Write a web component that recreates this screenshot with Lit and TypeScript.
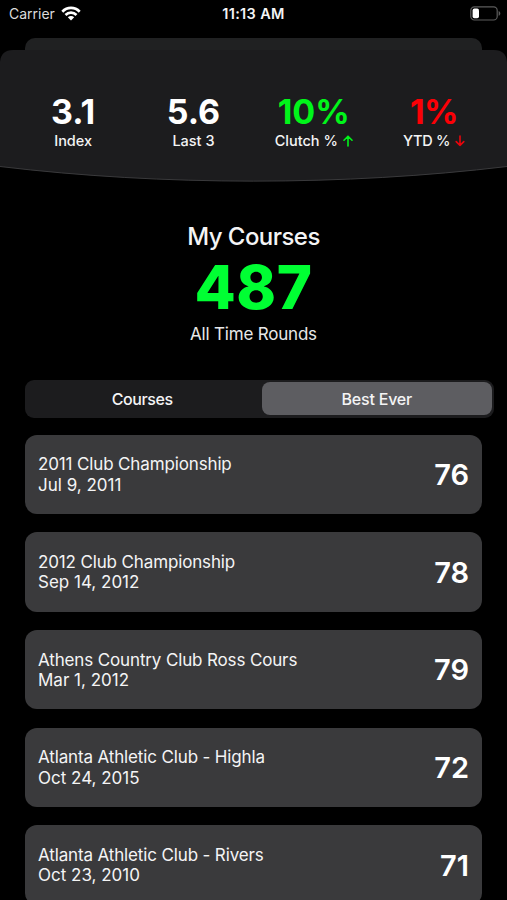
import { LitElement, html, css, svg } from "lit";
import { customElement } from "lit/decorators.js";
import { classMap } from "lit/directives/class-map.js";

type Trend = "up" | "down" | "";

const stats: { value: string; label: string; trend: Trend }[] = [
  { value: "3.1", label: "Index", trend: "" },
  { value: "5.6", label: "Last 3", trend: "" },
  { value: "10%", label: "Clutch %", trend: "up" },
  { value: "1%", label: "YTD %", trend: "down" },
];

const rounds = [
  { course: "2011 Club Championship", date: "Jul 9, 2011", score: 76 },
  { course: "2012 Club Championship", date: "Sep 14, 2012", score: 78 },
  { course: "Athens Country Club Ross Cours", date: "Mar 1, 2012", score: 79 },
  { course: "Atlanta Athletic Club - Highla", date: "Oct 24, 2015", score: 72 },
  { course: "Atlanta Athletic Club - Rivers", date: "Oct 23, 2010", score: 71 },
];

@customElement("app-root")
export class AppRoot extends LitElement {
  static styles = css`
    :host {
      display: block;
      position: relative;
      width: 507px;
      height: 900px;
      overflow: hidden;
      background: #000;
      color: #f4f4f5;
      font-family: Inter, "Liberation Sans", sans-serif;
    }
    .status {
      display: grid;
      grid-template-columns: 1fr auto 1fr;
      align-items: center;
      height: 28px;
      padding: 0 6px 0 9px;
      font-size: 14px;
      box-sizing: border-box;
      line-height: 28px;
    }
    .carrier { display: flex; align-items: center; gap: 6px; color: #dcdcdc; }
    .wifi { display: block; margin-top: -2px; }
    .time { font-weight: 600; font-size: 14.5px; letter-spacing: 0.35px; margin-right: 3px; }
    .power { display: flex; justify-content: flex-end; margin-top: -1px; }
    .back-sheet {
      height: 12px;
      margin: 10px 25px 0;
      border-radius: 10px 10px 0 0;
      background: #202122;
    }
    .header { position: relative; height: 132px; }
    .curve { position: absolute; inset: 0; display: block; }
    .stats {
      position: relative;
      display: grid;
      grid-template-columns: repeat(4, 120.3px);
      padding: 44px 0 0 13px;
    }
    .stat { text-align: center; }
    .value { font-size: 34px; line-height: 36px; font-weight: 650; color: #fff; }
    .value.up { color: #00f51a; }
    .value.down { color: #fc0006; letter-spacing: -0.5px; }
    .label {
      display: flex;
      justify-content: center;
      align-items: center;
      gap: 5px;
      margin-top: 1px;
      font-size: 14.5px;
      line-height: 20px;
      font-weight: 500;
    }
    .label.down { letter-spacing: -0.3px; }
    .summary { text-align: center; margin-top: 41px; }
    .title { font-size: 24px; line-height: 28px; font-weight: 550; letter-spacing: -0.55px; }
    .total { font-size: 60px; line-height: 60px; font-weight: 800; color: #00ff33; margin-top: 6px; letter-spacing: 0.6px; }
    .caption { font-size: 17px; line-height: 22px; margin-top: 6px; color: #e8e8e8; letter-spacing: -0.2px; }
    .tabs {
      display: grid;
      grid-template-columns: 1fr 1fr;
      width: 469px;
      height: 38px;
      box-sizing: border-box;
      margin: 34.5px 0 0 25px;
      padding: 2.5px 2px;
      border-radius: 9px;
      background: #1c1c1e;
    }
    .tab {
      display: flex;
      align-items: center;
      justify-content: center;
      border-radius: 8px;
      font-size: 16px;
      font-weight: 500;
      letter-spacing: -0.4px;
      padding-right: 2px;
    }
    .tab.active { background: #5d5d61; margin-left: 2px; padding: 0; letter-spacing: -0.2px; }
    .list { display: flex; flex-direction: column; gap: 18.2px; margin: 17px 25px 0; }
    .card {
      display: flex;
      justify-content: space-between;
      align-items: center;
      height: 79.5px;
      box-sizing: border-box;
      padding: 0.6px 13px 0;
      border-radius: 12px;
      background: #3a3a3c;
      flex: none;
    }
    .info { font-size: 17px; line-height: 20.3px; white-space: nowrap; }
    .course { letter-spacing: -0.14px; }
    .score { font-size: 29px; font-weight: 600; color: #fff; }
  `;

  private arrow(trend: Trend) {
    if (!trend) return "";
    const up = trend === "up";
    return html`<svg width="10" height="12" viewBox="0 0 10 12" fill="none"
      stroke=${up ? "#00f51a" : "#e8050c"} stroke-width="1.6" stroke-linecap="round" stroke-linejoin="round">
      ${up ? svg`<path d="M5 11V1.2M1 5.2L5 1.2L9 5.2"/>` : svg`<path d="M5 1V10.4M1.2 6.6L5 10.4L8.8 6.6"/>`}
    </svg>`;
  }

  render() {
    return html`
      <div class="status">
        <div class="carrier">
          <span>Carrier</span>
          <svg class="wifi" width="20" height="15" viewBox="0 0 20 15" fill="none" stroke="#fff" stroke-width="2.7">
            <path d="M1.3 5.7C6.2 .7 13.8 .7 18.7 5.7"/>
            <path d="M4.5 9C7.6 5.9 12.4 5.9 15.5 9"/>
            <path d="M10 14.4L6.8 11.3C8.6 9.6 11.4 9.6 13.2 11.3Z" fill="#fff" stroke="none"/>
          </svg>
        </div>
        <div class="time">11:13 AM</div>
        <div class="power">
          <svg width="31" height="15" viewBox="0 0 31 15">
            <rect x=".8" y=".8" width="26.4" height="13.2" rx="3.6" fill="none" stroke="#5c5c5c" stroke-width="1.2"/>
            <rect x="2.6" y="2.6" width="6.4" height="9.6" rx="1.8" fill="#fff"/>
            <path d="M28.6 5C30.9 5.8 30.9 9 28.6 9.8Z" fill="#5c5c5c"/>
          </svg>
        </div>
      </div>
      <div class="back-sheet"></div>
      <div class="header">
        <svg class="curve" width="507" height="132" viewBox="0 0 507 132">
          <path d="M0 12Q1 0 13 0H494Q506 0 507 12V116.5C345 136 162 136 0 116.5Z" fill="#1c1c1e"/>
          <path d="M0 116.5C162 136 345 136 507 116.5" fill="none" stroke="#3a3a3c" stroke-width="1"/>
        </svg>
        <div class="stats">
          ${stats.map((s) => {
            const tone = { up: s.trend === "up", down: s.trend === "down" };
            return html`<div class="stat">
              <div class=${classMap({ value: true, ...tone })}>${s.value}</div>
              <div class=${classMap({ label: true, ...tone })}><span>${s.label}</span>${this.arrow(s.trend)}</div>
            </div>`;
          })}
        </div>
      </div>
      <div class="summary">
        <div class="title">My Courses</div>
        <div class="total">487</div>
        <div class="caption">All Time Rounds</div>
      </div>
      <div class="tabs">
        <div class="tab">Courses</div>
        <div class="tab active">Best Ever</div>
      </div>
      <div class="list">
        ${rounds.map(
          (r) => html`<div class="card">
            <div class="info"><div class="course">${r.course}</div><div>${r.date}</div></div>
            <div class="score">${r.score}</div>
          </div>`
        )}
      </div>
    `;
  }
}
